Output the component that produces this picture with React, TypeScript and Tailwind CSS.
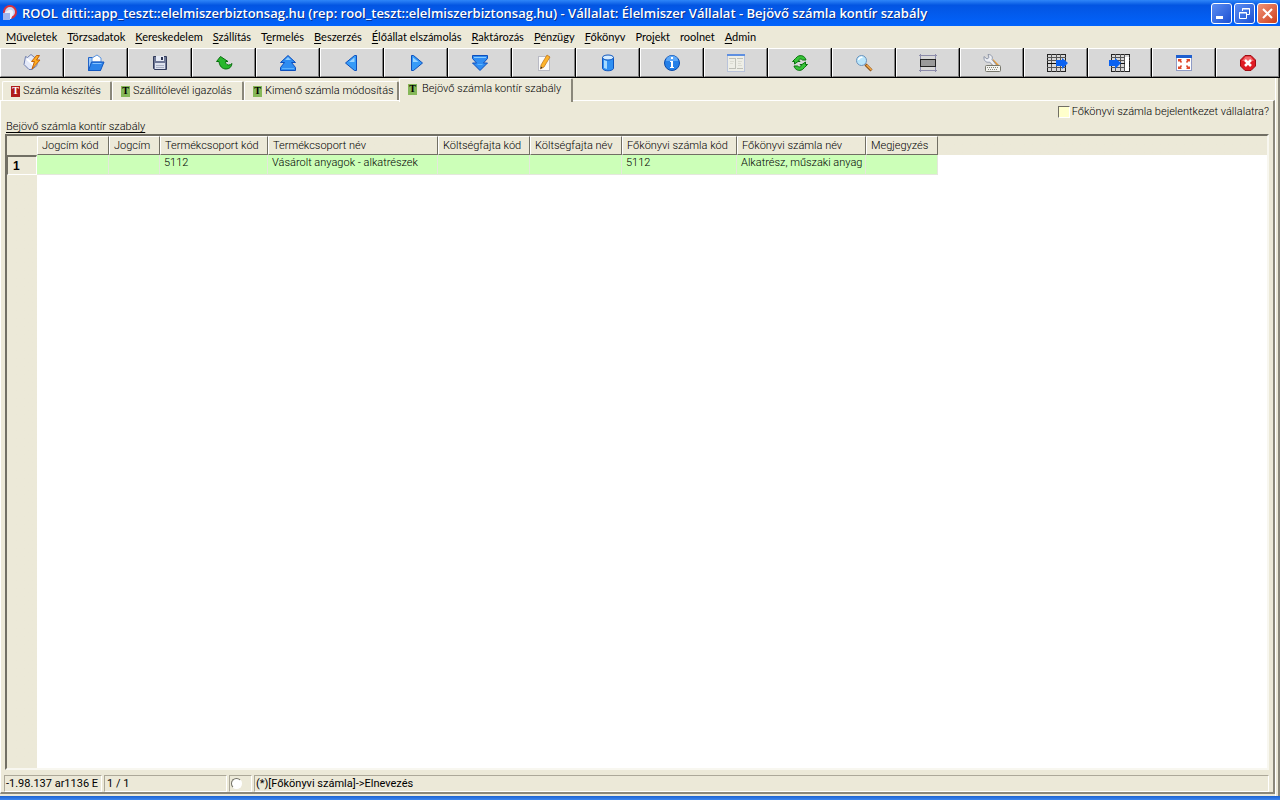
import type { ReactNode } from 'react';

const title =
    'ROOL ditti::app_teszt::elelmiszerbiztonsag.hu (rep: rool_teszt::elelmiszerbiztonsag.hu) - Vállalat: Élelmiszer Vállalat - Bejövő számla kontír szabály';

// hot = index of the underlined access key, -1 for none
const menuItems = [
    { label: 'Műveletek', hot: 0 },
    { label: 'Törzsadatok', hot: 0 },
    { label: 'Kereskedelem', hot: 0 },
    { label: 'Szállítás', hot: 0 },
    { label: 'Termelés', hot: 1 },
    { label: 'Beszerzés', hot: 0 },
    { label: 'Élőállat elszámolás', hot: 0 },
    { label: 'Raktározás', hot: 0 },
    { label: 'Pénzügy', hot: 0 },
    { label: 'Főkönyv', hot: 0 },
    { label: 'Projekt', hot: 3 },
    { label: 'roolnet', hot: -1 },
    { label: 'Admin', hot: 0 },
];

const tabs = [
    { label: 'Számla készítés', width: 'w-[110px]', badge: 'bg-[#b01c1c] text-white' },
    { label: 'Szállítólevél igazolás', width: 'w-[132px]', badge: 'bg-[#86b858] text-black' },
    { label: 'Kimenő számla módosítás', width: 'w-[155px]', badge: 'bg-[#86b858] text-black' },
    { label: 'Bejövő számla kontír szabály', width: 'w-[174px]', badge: 'bg-[#86b858] text-black', active: true },
];

const columns = [
    { label: 'Jogcím kód', width: 'w-[72px]' },
    { label: 'Jogcím', width: 'w-[51px]' },
    { label: 'Termékcsoport kód', width: 'w-[108px]' },
    { label: 'Termékcsoport név', width: 'w-[170px]' },
    { label: 'Költségfajta kód', width: 'w-[92px]' },
    { label: 'Költségfajta név', width: 'w-[92px]' },
    { label: 'Főkönyvi számla kód', width: 'w-[115px]' },
    { label: 'Főkönyvi számla név', width: 'w-[129px]' },
    { label: 'Megjegyzés', width: 'w-[72px]' },
];

const rows = [['', '', '5112', 'Vásárolt anyagok - alkatrészek', '', '', '5112', 'Alkatrész, műszaki anyag', '']];

function Grid({ cut }: { cut?: boolean }) {
    return (
        <>
            <rect x="2.5" y="2.5" width="18" height="17" fill="#d8d8d8" stroke="#222" />
            <path d="M2 5.500h19M2 8.500h19M2 15.500h19M6.500 2v18M15.500 2v18M11.500 2v18" stroke="#555" />
            <path d="M2 11.500h19" stroke="#111" />
            {cut && <path d="M16 5h4v14h-4z" fill="#fff" />}
        </>
    );
}

const toolbar: { name: string; icon: ReactNode }[] = [
    {
        name: 'Végrehajtás',
        icon: (
            <>
                <path d="M4.500 4.500l2 1L10 2.500l6 5v6l-5 4H8l-5-5z" fill="#e4e9f8" stroke="#6f7fae" />
                <path d="M6 7l8 7" stroke="#fff" strokeWidth="2" />
                <path d="M15.500 3.500l-5 6h3l-2.500 7.500 8-9h-3.500l3-4.500z" fill="#ffad1f" stroke="#c4630d" />
            </>
        ),
    },
    {
        name: 'Megnyitás',
        icon: (
            <>
                <path d="M3.500 18.500v-13h5l1 2h6v11z" fill="#9cc7f8" stroke="#2264c8" />
                <path d="M7 10V6l5-3 4 3v4z" fill="#fff" stroke="#5c94de" />
                <path d="M3.500 18.500l3-8.500h12.500l-3.500 8.500z" fill="#2c83ea" stroke="#1257c0" />
                <path d="M7.500 11.500h9" stroke="#86c2ff" />
            </>
        ),
    },
    {
        name: 'Mentés',
        icon: (
            <>
                <path d="M4.500 4.500h13v13h-12l-1-1z" fill="#6f7896" stroke="#333c5b" />
                <rect x="7" y="4" width="8" height="5" fill="#e6eaf4" />
                <rect x="12" y="5" width="2" height="3" fill="#2c3452" />
                <rect x="6" y="11" width="10" height="6" fill="#dde2ee" />
                <path d="M7 13.500h8M7 15.500h8" stroke="#a9b0c4" />
            </>
        ),
    },
    {
        name: 'Visszavonás',
        icon: (
            <path d="M7.500 4.500L3.500 9.500h2.500c.5 5 3.500 7.500 7 7.500 3.500 0 5.500-2 6-5.500-2 2-5 2-6 0-.5-1-.7-1.500-.5-2h2.500z" fill="#29b82c" stroke="#08700d" />
        ),
    },
    {
        name: 'Első',
        icon: (
            <>
                <path d="M11 3.500L3.500 10.500h4L3.500 15.500v3h15v-3L14.500 10.500h4z" fill="#2f8df2" stroke="#0d4fbd" />
                <path d="M11 5L8 8h6z" fill="#8acbff" />
                <path d="M5 16.500h12" stroke="#5fb2fb" />
            </>
        ),
    },
    {
        name: 'Előző',
        icon: (
            <>
                <path d="M15.500 3.500v15h-2L4.500 11l9-7.500z" fill="#369bf7" stroke="#0d4fbd" />
                <path d="M13.500 5.500V10H8z" fill="#9ad4ff" />
            </>
        ),
    },
    {
        name: 'Következő',
        icon: (
            <>
                <path d="M6.500 3.500v15h2l9-7.500-9-7.500z" fill="#369bf7" stroke="#0d4fbd" />
                <path d="M8 5.500V10h5.500z" fill="#9ad4ff" />
            </>
        ),
    },
    {
        name: 'Utolsó',
        icon: (
            <>
                <path d="M3.500 3.500h15v3l-4 4.500h4L11 18.500 3.500 11h4l-4-4.500z" fill="#2f8df2" stroke="#0d4fbd" />
                <path d="M5 5.500h12" stroke="#8acbff" />
                <path d="M8 12h6l-1 1H9z" fill="#5fb2fb" />
            </>
        ),
    },
    {
        name: 'Szerkesztés',
        icon: (
            <>
                <rect x="5.500" y="4.500" width="11" height="14" fill="#fbfbfb" stroke="#b9bac4" />
                <path d="M14 3l3 2-6 10-3.500 2 .5-4z" fill="#fdb42c" stroke="#b9701a" strokeWidth=".7" />
                <path d="M7.500 17l.3-2.500 1.700 1z" fill="#333" />
            </>
        ),
    },
    {
        name: 'Adatbázis',
        icon: (
            <>
                <path d="M5.500 5.500v11c1 3 10 3 11 0v-11" fill="#2f90f2" stroke="#0d55be" />
                <path d="M7 8v8l3 1V9z" fill="#a5daff" />
                <ellipse cx="11" cy="5.500" rx="5.500" ry="2.500" fill="#d5ecff" stroke="#0d55be" />
            </>
        ),
    },
    {
        name: 'Információ',
        icon: (
            <>
                <circle cx="11" cy="11" r="7.500" fill="#2580e8" stroke="#0b4bab" />
                <path d="M5 9a6 5.500 0 0 1 12 0z" fill="#5fa9f8" />
                <path d="M10 5h2v2h-2zM9 9h3v6h1v1H9v-1h1v-5H9z" fill="#fff" />
            </>
        ),
    },
    {
        name: 'Elrendezés',
        icon: (
            <>
                <rect x="2.500" y="2.500" width="17" height="17" fill="#eeeee6" stroke="#b9c3da" />
                <path d="M2 3h18" stroke="#5e8fe0" strokeWidth="2" />
                <path d="M4 6.500h6M12 6.500h6M4 16.500h6M12 16.500h6M10.500 6v11" stroke="#bfc0b8" />
                <path d="M5 9.500h4M5 11.500h3M13 9.500h4M13 11.500h3M13 13.500h4" stroke="#dcdcd2" />
            </>
        ),
    },
    {
        name: 'Frissítés',
        icon: (
            <>
                <path d="M17 8C16 4 12 2.500 8.500 4.500L6.500 6.500 3.500 9.500h2V12l3.500-2.500h2L9.500 8c1.500-1.500 3-1 4 0z" fill="#37c437" stroke="#08700d" />
                <path d="M5 14C6 18 10 19.500 13.500 17.500l2-2 3-3h-2V10L13 12.500h-2l1.500 1.500c-1.500 1.500-3 1-4 0z" fill="#37c437" stroke="#08700d" />
            </>
        ),
    },
    {
        name: 'Keresés',
        icon: (
            <>
                <path d="M12.500 12.500l6 6" stroke="#8c5117" strokeWidth="3" />
                <path d="M13.500 13l5 5" stroke="#f2a848" strokeWidth="1.500" />
                <circle cx="8.500" cy="8.500" r="5" fill="#b9e5fb" stroke="#6a93bd" />
                <path d="M5.500 8a3 3 0 0 1 4-2.500" stroke="#fff" strokeWidth="1.500" fill="none" />
            </>
        ),
    },
    {
        name: 'Keret',
        icon: (
            <>
                <path d="M3.500 2v18M18.500 2v18M2 3.500h18M2 18.500h18" stroke="#8d8cab" />
                <rect x="3.500" y="7.500" width="15" height="7" fill="#9a9a9a" stroke="#222" />
            </>
        ),
    },
    {
        name: 'Beállítások',
        icon: (
            <>
                <path d="M10 14l2-7 7 7z" fill="#e79a32" />
                <path d="M3 4.500l3 2.500 2-1.500L7 2.500c4 0 5 3 4 5l4 5-2 2-4.500-4.500c-3 1-6-1-5.500-5.500" fill="#eef0f5" stroke="#9097a8" />
                <rect x="4.500" y="13.500" width="15" height="6" rx="1" fill="#f4f4f0" stroke="#77776c" />
                <path d="M6 15.500h12M7 17.500h10" stroke="#8a8a80" strokeDasharray="1 1" />
            </>
        ),
    },
    {
        name: 'Export',
        icon: (
            <>
                <Grid />
                <path d="M11 8h6V6l6 5-6 6v-3h-6z" fill="#0a62f2" />
            </>
        ),
    },
    {
        name: 'Import',
        icon: (
            <>
                <Grid cut />
                <path d="M0 8h6V6l6 5-6 6v-3H0z" fill="#0a62f2" />
                <path d="M12 11.500h4" stroke="#111" />
            </>
        ),
    },
    {
        name: 'Teljes képernyő',
        icon: (
            <>
                <rect x="3.500" y="3.500" width="15" height="15" fill="#fff" stroke="#8e9bc6" />
                <path d="M3 4.500h16" stroke="#1e5fd0" strokeWidth="3" />
                <path d="M5 7h4L8 8l1 2-1 1-2-2-1 1zM17 7h-4l1 1-1 2 1 1 2-2 1 1zM5 17h4l-1-1 1-2-1-1-2 2-1-1zM17 17h-4l1-1-1-2 1-1 2 2 1-1z" fill="#e04a2c" />
            </>
        ),
    },
    {
        name: 'Kilépés',
        icon: (
            <>
                <path d="M8 3.500h6l4.500 4.500v6L14 18.500H8L3.500 14V8z" fill="#e01c24" stroke="#9d0c12" />
                <path d="M5 9l3.500-4.500h5L17 9z" fill="#f2686c" />
                <path d="M8 8l6 6M14 8l-6 6" stroke="#fff" strokeWidth="2.500" />
            </>
        ),
    },
];

function MenuLabel({ label, hot }: { label: string; hot: number }) {
    if (hot < 0) return <>{label}</>;
    return (
        <>
            {label.slice(0, hot)}
            <span className="underline underline-offset-2">{label[hot]}</span>
            {label.slice(hot + 1)}
        </>
    );
}

function TitleBar() {
    const button = 'flex h-[21px] w-[21px] items-center justify-center rounded-[3px] border border-white';
    return (
        <header className="flex h-[26px] items-center bg-linear-to-b from-[#2f86f8] via-[#0355e2] via-20% to-[#0263fc] pl-[2px] pr-[2px]">
            <svg width="16" height="16" viewBox="0 0 16 16" className="shrink-0">
                <circle cx="8" cy="7" r="6" fill="#c9d4f3" stroke="#d8323c" strokeWidth="2" />
                <path d="M7 5a3 3 0 0 1 4 4l-2 5H2V8z" fill="#eef2fc" />
                <rect x="1" y="8" width="7" height="7" fill="#9fb6ee" />
            </svg>
            <h1 className="ml-1 flex-1 truncate font-['Open_Sans','Noto_Sans',sans-serif] text-[13px] font-semibold text-white [text-shadow:1px_1px_0_#0b2f8a]">
                {title}
            </h1>
            <div className="flex gap-[2px]">
                <button aria-label="Kis méret" className={`${button} bg-linear-to-br from-[#5c8df2] to-[#1c4fd2]`}>
                    <svg width="19" height="19" viewBox="0 0 19 19">
                        <path d="M4 13.500h7" stroke="#fff" strokeWidth="3" />
                    </svg>
                </button>
                <button aria-label="Előző méret" className={`${button} bg-linear-to-br from-[#5c8df2] to-[#1c4fd2]`}>
                    <svg width="19" height="19" viewBox="0 0 19 19" fill="none" stroke="#fff">
                        <path d="M7.500 7V4.500h7v6H12M7 5h8M4.500 8.500h7v6h-7zM4 9h8" />
                    </svg>
                </button>
                <button aria-label="Bezárás" className={`${button} bg-linear-to-br from-[#f09277] to-[#cc3c14]`}>
                    <svg width="19" height="19" viewBox="0 0 19 19">
                        <path d="M5 5l9 9M14 5l-9 9" stroke="#fff" strokeWidth="2" />
                    </svg>
                </button>
            </div>
        </header>
    );
}

export default function App() {
    return (
        <div className="flex min-h-screen flex-col bg-[#ece9d8] font-['Roboto','Liberation_Sans',sans-serif] text-[11px] font-light leading-4 text-black">
            <TitleBar />

            <nav className="flex h-[22px] items-center gap-[10px] px-[6px] font-['Lato','Liberation_Sans',sans-serif] font-normal">
                {menuItems.map((item) => (
                    <button key={item.label} className="whitespace-nowrap">
                        <MenuLabel {...item} />
                    </button>
                ))}
            </nav>

            <div role="toolbar" className="flex h-[30px] border-b border-black">
                {toolbar.map((tool) => (
                    <button
                        key={tool.name}
                        aria-label={tool.name}
                        className="flex flex-1 border-r border-black"
                    >
                        <span className="flex h-full flex-1 items-center justify-center border border-t-white border-l-white border-r-[#808080] border-b-[#808080] bg-[#d8d8d8]">
                            <svg width="22" height="22" viewBox="0 0 22 22" fill="none" className="overflow-visible">
                                {tool.icon}
                            </svg>
                        </span>
                    </button>
                ))}
            </div>

            {/* Workspace with the sunken frame of the main window */}
            <div className="flex flex-1 border-r-2 border-[#8a877a] pr-[2px]">
                <main className="flex min-w-0 flex-1 flex-col border-r border-white">
                    <div role="tablist" className="flex h-[22px] items-end pl-[2px]">
                        {tabs.map((tab) => (
                            <button
                                key={tab.label}
                                role="tab"
                                aria-selected={!!tab.active}
                                className={`flex items-center whitespace-nowrap rounded-t-[2px] border-t border-l border-t-white border-l-white border-r-2 border-r-[#8a877a] bg-[#ece9d8] pl-[8px] ${tab.width} ${
                                    tab.active ? 'z-10 -mb-[2px] h-[24px] gap-[5px] pb-[3px]' : 'h-[19px] gap-[3px]'
                                }`}
                            >
                                <span className={`flex h-[11px] w-[9px] shrink-0 items-center justify-center font-['Liberation_Serif',serif] text-[10px] font-bold leading-none ${tab.badge}`}>
                                    T
                                </span>
                                {tab.label}
                            </button>
                        ))}
                    </div>

                    <section className="flex flex-1 flex-col border-t border-l border-r-2 border-b-2 border-t-white border-l-white border-r-[#8a877a] border-b-[#8a877a] pl-[4px] pr-[4px]">
                        <label className="mt-[3px] flex items-center gap-[2px] self-end">
                            <input
                                type="checkbox"
                                className="h-[12px] w-[12px] appearance-none border border-t-[#716f64] border-l-[#716f64] border-r-white border-b-white bg-[#ffffcc] checked:bg-[#716f64]"
                            />
                            Főkönyvi számla bejelentkezet vállalatra?
                        </label>
                        <h2 className="-mt-[1px] h-[15px] pl-px underline underline-offset-2">Bejövő számla kontír szabály</h2>

                        <div className="flex flex-1 flex-col border-2 border-t-[#716f64] border-l-[#716f64] border-r-[#f8f7f0] border-b-[#f8f7f0]">
                            <div className="flex-1 bg-linear-to-r from-[#ece9d8] from-[30px] to-white to-[30px]">
                                <div className="bg-linear-to-b from-[#ece9d8] from-[19px] to-transparent to-[19px]">
                                    <table className="w-[931px] table-fixed border-separate border-spacing-0 text-left">
                                        <thead>
                                            <tr className="h-[19px]">
                                                <th className="w-[30px]" aria-label="Sorszám" />
                                                {columns.map((column) => (
                                                    <th
                                                        key={column.label}
                                                        className={`whitespace-nowrap border-t border-l border-r border-b border-t-white border-l-white border-r-[#716f64] border-b-[#716f64] p-0 pl-[4px] font-light leading-[17px] ${column.width}`}
                                                    >
                                                        {column.label}
                                                    </th>
                                                ))}
                                            </tr>
                                        </thead>
                                        <tbody>
                                            {rows.map((row, i) => (
                                                <tr key={i} className="h-[20px]">
                                                    <th className="border-t-2 border-l border-b border-r border-t-[#716f64] border-l-[#716f64] border-r-white border-b-white bg-[#ece9d8] p-0 pl-[5px] font-['Liberation_Sans',Arial,sans-serif] text-[12px] leading-[16px]">
                                                        {i + 1}
                                                    </th>
                                                    {row.map((cell, j) => (
                                                        <td
                                                            key={j}
                                                            className="whitespace-nowrap border-r border-b border-[#e4e8dc] bg-[#ccffb8] p-0 pl-[4px] align-top leading-[15px]"
                                                        >
                                                            {cell}
                                                        </td>
                                                    ))}
                                                </tr>
                                            ))}
                                        </tbody>
                                    </table>
                                </div>
                            </div>
                        </div>

                        <footer className="-ml-px mt-[5px] flex h-[17px] gap-[2px] font-normal leading-[15px]">
                            <span className="w-[98px] whitespace-nowrap border border-t-[#aca899] border-l-[#aca899] border-r-white border-b-white pl-px">
                                -1.98.137 ar1136 E
                            </span>
                            <span className="w-[123px] border border-t-[#aca899] border-l-[#aca899] border-r-white border-b-white pl-[2px]">
                                1 / 1
                            </span>
                            <span className="flex w-[23px] items-center border border-t-[#aca899] border-l-[#aca899] border-r-white border-b-white pl-px">
                                <input
                                    type="radio"
                                    aria-label="Állapot"
                                    className="h-[11px] w-[11px] appearance-none rounded-full border border-t-[#716f64] border-l-[#716f64] border-r-white border-b-white bg-white"
                                />
                            </span>
                            <span className="flex-1 border border-t-[#aca899] border-l-[#aca899] border-r-white border-b-white pl-px">
                                (*)[Főkönyvi számla]-&gt;Elnevezés
                            </span>
                        </footer>
                    </section>
                    <div className="h-[2px]" />
                </main>
            </div>
            <div className="h-[4px] bg-linear-to-b from-[#1c62d0] to-[#3c86f0]" />
        </div>
    );
}
